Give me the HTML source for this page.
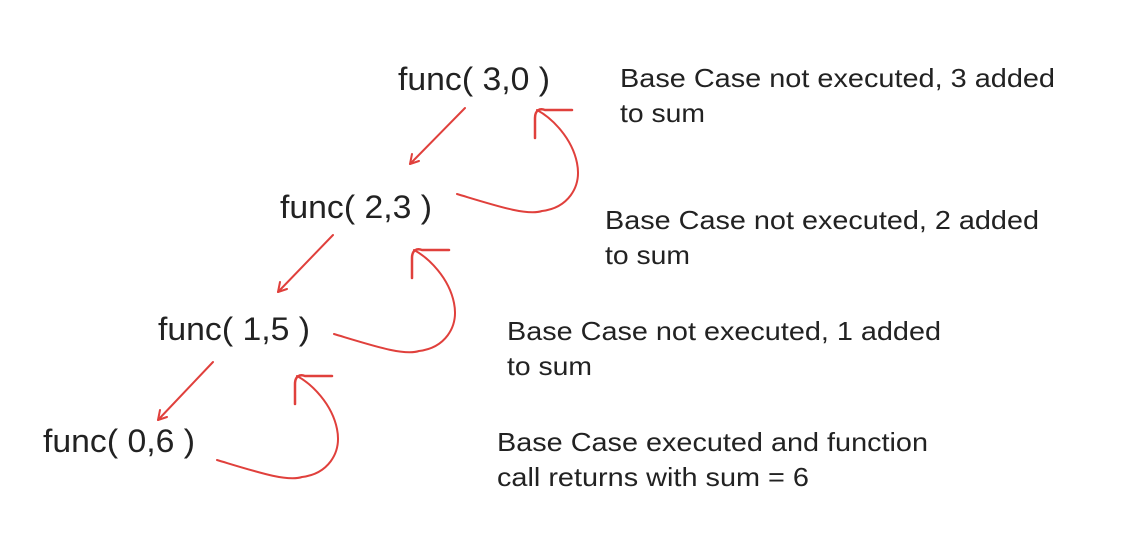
<!DOCTYPE html>
<html><head><meta charset="utf-8"><style>
html,body{margin:0;padding:0;background:#fff;}
svg{display:block}
text{font-family:"Liberation Sans",Arial,sans-serif;fill:#222;}
.f{font-size:32px}
.t{font-size:26px}
path{fill:none;stroke:#e0403c;stroke-width:2;stroke-linecap:round;stroke-linejoin:round}
</style></head><body>
<svg width="1124" height="554" viewBox="0 0 1124 554">
<text class="f" x="398" y="90" textLength="152" lengthAdjust="spacingAndGlyphs">func( 3,0 )</text>
<text class="f" x="280" y="218" textLength="152" lengthAdjust="spacingAndGlyphs">func( 2,3 )</text>
<text class="f" x="158" y="340" textLength="152" lengthAdjust="spacingAndGlyphs">func( 1,5 )</text>
<text class="f" x="43" y="452" textLength="152" lengthAdjust="spacingAndGlyphs">func( 0,6 )</text>

<text class="t" x="620" y="87" textLength="435" lengthAdjust="spacingAndGlyphs">Base Case not executed, 3 added</text>
<text class="t" x="620" y="122" textLength="85" lengthAdjust="spacingAndGlyphs">to sum</text>
<text class="t" x="605" y="229" textLength="434" lengthAdjust="spacingAndGlyphs">Base Case not executed, 2 added</text>
<text class="t" x="605" y="264" textLength="85" lengthAdjust="spacingAndGlyphs">to sum</text>
<text class="t" x="507" y="340" textLength="434" lengthAdjust="spacingAndGlyphs">Base Case not executed, 1 added</text>
<text class="t" x="507" y="375" textLength="85" lengthAdjust="spacingAndGlyphs">to sum</text>
<text class="t" x="497" y="451" textLength="431" lengthAdjust="spacingAndGlyphs">Base Case executed and function</text>
<text class="t" x="497" y="486" textLength="312" lengthAdjust="spacingAndGlyphs">call returns with sum = 6</text>

<g>
<path d="M465 108 L410 164"/><path d="M410 164 L412 154 M410 164 L419 161"/>
<path d="M333 235 L278 292"/><path d="M278 292 L280 282 M278 292 L287 289"/>
<path d="M213 362 L158 420"/><path d="M158 420 L160 410 M158 420 L167 417"/>
</g>
<g transform="translate(537,108)">
<path d="M-80 86 C-40 98 -10 108 5 103 C30 100 45 80 40 55 C35 30 15 10 0 2"/>
<path d="M-2 30 L-2 10 C-2 2 3 0 8 2 L35 2" style="stroke-width:2.5"/>
</g>
<g transform="translate(414,248)">
<path d="M-80 86 C-40 98 -10 108 5 103 C30 100 45 80 40 55 C35 30 15 10 0 2"/>
<path d="M-2 30 L-2 10 C-2 2 3 0 8 2 L35 2" style="stroke-width:2.5"/>
</g>
<g transform="translate(297,374)">
<path d="M-80 86 C-40 98 -10 108 5 103 C30 100 45 80 40 55 C35 30 15 10 0 2"/>
<path d="M-2 30 L-2 10 C-2 2 3 0 8 2 L35 2" style="stroke-width:2.5"/>
</g>
</svg>
</body></html>
